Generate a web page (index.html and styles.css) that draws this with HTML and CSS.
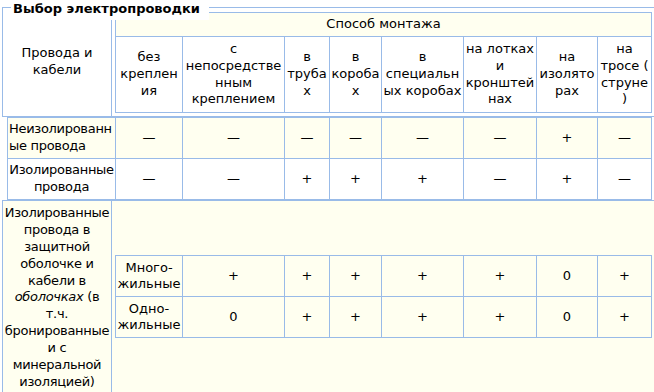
FILE: index.html
```html
<!DOCTYPE html>
<html lang="ru">
<head>
<meta charset="utf-8">
<title>Выбор электропроводки</title>
<link rel="stylesheet" href="styles.css">
</head>
<body>
<div class="frame">
  <div class="legend">Выбор электропроводки</div>

  <div class="sec-head">
    <div class="side"><span>Провода и кабели</span></div>
    <div class="grid head-grid">
      <div class="cell span-all cream">Способ монтажа</div>
      <div class="cell">без крепления</div>
      <div class="cell">с непосредственным креплением</div>
      <div class="cell">в трубах</div>
      <div class="cell">в коробах</div>
      <div class="cell">в специальных коробах</div>
      <div class="cell">на лотках и кронштейнах</div>
      <div class="cell">на изоляторах</div>
      <div class="cell"><span>на тросе (<br>струне<br>)</span></div>
    </div>
  </div>

  <div class="sec-rows">
    <div class="grid rows-grid">
      <div class="cell cream label label-left">Неизолированные провода</div>
      <div class="cell cream">—</div>
      <div class="cell cream">—</div>
      <div class="cell cream">—</div>
      <div class="cell cream">—</div>
      <div class="cell cream">—</div>
      <div class="cell cream">—</div>
      <div class="cell cream">+</div>
      <div class="cell cream">—</div>

      <div class="cell label">Изолированные провода</div>
      <div class="cell">—</div>
      <div class="cell">—</div>
      <div class="cell">+</div>
      <div class="cell">+</div>
      <div class="cell">+</div>
      <div class="cell">—</div>
      <div class="cell">+</div>
      <div class="cell">—</div>
    </div>
  </div>

  <div class="sec-cable">
    <div class="side cable-side"><span>Изолированные провода в защитной оболочке и кабели в <i>оболочках</i> (в т.ч. бронированные и с минеральной изоляцией)</span></div>
    <div class="grid sub-grid">
      <div class="cell cream">Много-жильные</div>
      <div class="cell cream">+</div>
      <div class="cell cream">+</div>
      <div class="cell cream">+</div>
      <div class="cell cream">+</div>
      <div class="cell cream">+</div>
      <div class="cell cream">0</div>
      <div class="cell cream">+</div>

      <div class="cell cream">Одно-жильные</div>
      <div class="cell cream">0</div>
      <div class="cell cream">+</div>
      <div class="cell cream">+</div>
      <div class="cell cream">+</div>
      <div class="cell cream">+</div>
      <div class="cell cream">0</div>
      <div class="cell cream">+</div>
    </div>
  </div>
</div>
</body>
</html>
```

FILE: styles.css
```css
* {
  box-sizing: border-box;
}

html {
  overflow: hidden;
  background: #ffffff;
}

body {
  margin: 0;
  padding: 0;
  font-family: "DejaVu Sans", Verdana, sans-serif;
  font-size: 13px;
  line-height: 1.3;
  color: #000000;
}

.frame {
  position: relative;
  margin: 7px 0 0 2px;
  width: 662px;
  border-top: 1px solid #99bbe8;
}

.legend {
  position: absolute;
  left: 9px;
  top: -8px;
  width: 198px;
  height: 20px;
  padding: 0 0 0 2px;
  line-height: 17px;
  font-weight: bold;
  background: #ffffff;
  z-index: 1;
}

.grid {
  flex-shrink: 0;
  display: grid;
  gap: 1px;
  background: #99bbe8;
  border: 1px solid #99bbe8;
  grid-template-columns: 66px 101px 44px 51px 81px 72px 60px 53px;
}

.cell {
  display: flex;
  align-items: center;
  justify-content: center;
  text-align: center;
  padding: 0 1px;
  background: #ffffff;
  overflow-wrap: anywhere;
}

.cream {
  background: #fffff0;
}

.span-all {
  grid-column: 1 / -1;
}

.label {
  padding: 0;
  letter-spacing: -0.3px;
}

.label-left {
  justify-content: flex-start;
  text-align: left;
  padding-left: 1px;
}

/* header section */
.sec-head {
  display: flex;
  border-left: 1px solid #99bbe8;
  border-bottom: 1px solid #99bbe8;
}

.side {
  flex: 0 0 109px;
  display: flex;
  align-items: center;
  justify-content: center;
  text-align: center;
  border-right: 1px solid #99bbe8;
}

.head-grid {
  width: 537px;
  margin: 4px 0 3px 3px;
  grid-template-rows: 23px 75px;
}

/* wire rows */
.sec-rows {
  padding-left: 5px;
}

.rows-grid {
  width: 645px;
  grid-template-columns: 107px 66px 101px 44px 51px 81px 72px 60px 53px;
  grid-template-rows: 40px 40px;
}

/* cable section */
.sec-cable {
  display: flex;
  align-items: center;
  background: #fffff0;
  border-top: 1px solid #99bbe8;
  border-left: 1px solid #99bbe8;
}

.cable-side {
  align-self: stretch;
  padding: 4px 0 2px;
  letter-spacing: -0.3px;
  overflow-wrap: anywhere;
}

.sub-grid {
  width: 537px;
  margin-left: 3px;
  grid-template-rows: 40px 40px;
}
```
